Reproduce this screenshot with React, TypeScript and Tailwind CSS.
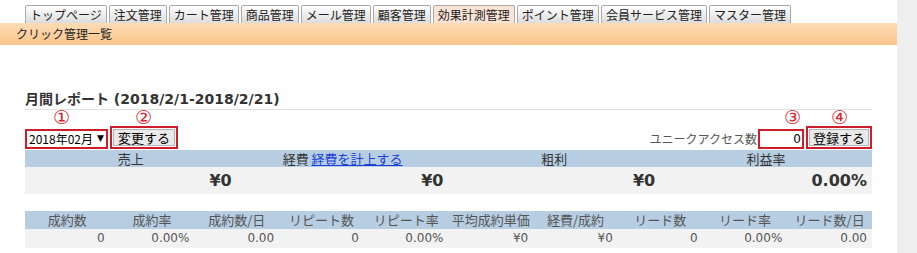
import React from "react";

const tabs = [
    "トップページ",
    "注文管理",
    "カート管理",
    "商品管理",
    "メール管理",
    "顧客管理",
    "効果計測管理",
    "ポイント管理",
    "会員サービス管理",
    "マスター管理",
];

const summary = [
    { label: "売上", value: "¥0" },
    { label: "経費", link: "経費を計上する", value: "¥0" },
    { label: "粗利", value: "¥0" },
    { label: "利益率", value: "0.00%" },
];

const stats = [
    ["成約数", "0"],
    ["成約率", "0.00%"],
    ["成約数/日", "0.00"],
    ["リピート数", "0"],
    ["リピート率", "0.00%"],
    ["平均成約単価", "¥0"],
    ["経費/成約", "¥0"],
    ["リード数", "0"],
    ["リード率", "0.00%"],
    ["リード数/日", "0.00"],
];

const font = "font-['Verdana','DejaVu_Sans','Noto_Sans_CJK_JP',sans-serif]";
const jp = "font-['Noto_Sans_CJK_JP',sans-serif]";

export default function App() {
    return (
        <div className={`flex w-[917px] h-[253px] bg-white text-[#333] overflow-hidden ${font}`}>
            <div className="w-[897px] flex flex-col">
                {/* tabs */}
                <div className={`flex gap-[2px] pl-[25px] pt-[5px] h-[23px] ${jp}`}>
                    {tabs.map((t) => (
                        <div
                            key={t}
                            className={
                                "h-[18px] px-[4px] border border-b-0 border-[#a9a9a9] rounded-t-[2px] text-[12px] leading-[17px] text-[#222] " +
                                (t === "効果計測管理"
                                    ? "bg-[#fbe4d6]"
                                    : "bg-gradient-to-b from-[#ffffff] to-[#dcdcdc]")
                            }
                        >
                            {t}
                        </div>
                    ))}
                </div>
                {/* orange bar */}
                <div
                    className={`h-[22px] bg-gradient-to-b from-[#fddcb6] to-[#fbc48a] pl-[16px] text-[12px] leading-[22px] text-[#222] ${jp}`}
                >
                    クリック管理一覧
                </div>

                <div className="w-[847px] ml-[25px]">
                    <div className="mt-[45px] h-[20px] border-b border-[#e2e2e2] text-[14px] font-bold leading-[18px] text-[#333]">
                        月間レポート (2018/2/1-2018/2/21)
                    </div>

                    {/* controls */}
                    <div className="relative flex items-end justify-between h-[40px] pb-[1px]">
                        <span className="absolute left-[28px] top-[-2px] text-[19px] text-[#d9262f] leading-none">①</span>
                        <span className="absolute left-[110px] top-[-2px] text-[19px] text-[#d9262f] leading-none">②</span>
                        <span className="absolute left-[759px] top-[-2px] text-[19px] text-[#d9262f] leading-none">③</span>
                        <span className="absolute left-[806px] top-[-2px] text-[19px] text-[#d9262f] leading-none">④</span>
                        <div className="flex items-end gap-[2px]">
                            <div className="flex items-center h-[20px] px-[2px] border-2 border-[#cc1e2b] text-[12px] text-black">
                                <span className={jp}>2018年02月</span>
                                <span className="ml-[4px] text-[9px]">▼</span>
                            </div>
                            <div className="h-[23px] border-2 border-[#cc1e2b] p-[1px]">
                                <div className={`h-full px-[4px] bg-[#e9e9e9] border border-[#b5b5b5] text-[13px] leading-[15px] text-black ${jp}`}>
                                    変更する
                                </div>
                            </div>
                        </div>
                        <div className="flex items-end gap-[1px]">
                            <span className={`text-[12px] text-[#555] leading-[20px] ${jp}`}>ユニークアクセス数</span>
                            <div className="w-[46px] h-[20px] border-2 border-[#cc1e2b] bg-white text-right pr-[1px] text-[12px] leading-[16px] text-black">
                                0
                            </div>
                            <div className="h-[23px] ml-[1px] border-2 border-[#cc1e2b] p-[1px]">
                                <div className={`h-full px-[3px] bg-[#e9e9e9] border border-[#b5b5b5] text-[13px] leading-[15px] text-black ${jp}`}>
                                    登録する
                                </div>
                            </div>
                        </div>
                    </div>

                    {/* summary */}
                    <div className="grid grid-cols-4">
                        {summary.map((s) => (
                            <div key={s.label}>
                                <div className={`h-[17px] bg-[#b7cee2] text-center text-[13px] leading-[17px] text-[#333] ${jp}`}>
                                    {s.label}
                                    {s.link && (
                                        <>
                                            {" "}
                                            <span className="text-[#1a3fd8] underline">{s.link}</span>
                                        </>
                                    )}
                                </div>
                                <div className="h-[27px] bg-[#f2f2f2] text-right pr-[5px] text-[16px] font-bold leading-[27px] text-[#333]">
                                    {s.value}
                                </div>
                            </div>
                        ))}
                    </div>

                    {/* stats */}
                    <div className="grid grid-cols-10 mt-[17px]">
                        {stats.map(([label, value]) => (
                            <div key={label}>
                                <div className={`h-[18px] bg-[#b7cee2] text-center text-[13px] leading-[18px] text-[#555] ${jp}`}>
                                    {label}
                                </div>
                                <div className="h-[19px] bg-[#f2f2f2] text-right pr-[5px] text-[12px] leading-[19px] text-[#555]">
                                    {value}
                                </div>
                            </div>
                        ))}
                    </div>
                </div>
            </div>
            <div className="w-[20px] bg-[#eeeeee]" />
        </div>
    );
}
